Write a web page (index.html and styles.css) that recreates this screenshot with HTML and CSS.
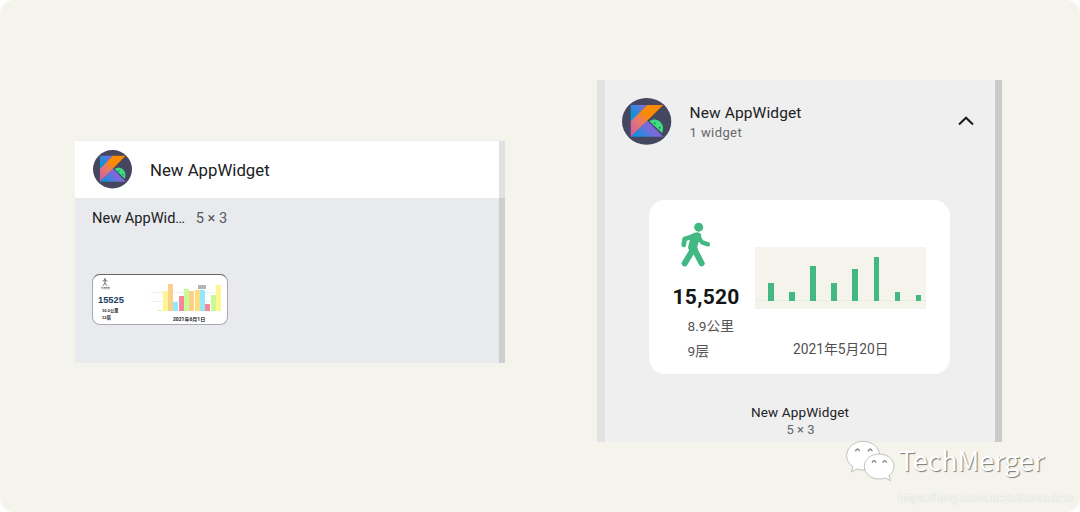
FILE: index.html
```
<!DOCTYPE html>
<html lang="zh">
<head>
    <meta charset="UTF-8">
    <title>New AppWidget</title>
    <link rel="stylesheet" href="styles.css">
</head>
<body>
<div class="outer">
    <!--旧版小组件列表-->
    <div class="old">
        <div class="old-head">
            <svg class="logo-small" viewBox="0 0 49 47" preserveAspectRatio="none">
                <defs>
                    <linearGradient id="orange" x1="1" y1="0" x2="0" y2="1">
                        <stop offset=".4" stop-color="#fb8a00"/>
                        <stop offset=".62" stop-color="#e9796a"/>
                        <stop offset="1" stop-color="#c45ab0"/>
                    </linearGradient>
                    <linearGradient id="blue" x1="0" y1="1" x2="1" y2="0">
                        <stop offset=".3" stop-color="#0c93dc"/>
                        <stop offset=".85" stop-color="#766fdd"/>
                    </linearGradient>
                    <linearGradient id="blue2" x1="0" y1="1" x2="1" y2=".5">
                        <stop offset=".15" stop-color="#0c93dc"/>
                        <stop offset=".65" stop-color="#7a6bdc"/>
                    </linearGradient>
                </defs>
                <g id="kotlin">
                    <ellipse cx="24.5" cy="23.5" rx="24.5" ry="23.5" fill="#45465f"/>
                    <path d="M8.7 7H25L8.7 24z" fill="url(#blue)"/>
                    <path d="M8.7 38.8L25 22.5l16 16.3z" fill="url(#blue2)"/>
                    <path d="M25 7h16L8.7 38.8V23.3z" fill="url(#orange)"/>
                    <path d="M33 23l-.6-2.8M39.6 28.6l2.6-1.2" stroke="#287a55" stroke-width=".9"/>
                    <path d="M27.2 23.3C30.5 20.8 35.5 21.2 38.2 24.2c2.9 3 3.2 7.6 1.6 11z" fill="#3ddc84"/>
                    <circle cx="32.6" cy="25.4" r=".8" fill="#27543f"/>
                    <circle cx="37.5" cy="30" r=".8" fill="#27543f"/>
                </g>
            </svg>
            <p class="old-title">New AppWidget</p>
        </div>
        <div class="old-body">
            <p class="old-name">New AppWid… <span>5 × 3</span></p>
            <div class="mini">
                <div class="mini-info">
                    <svg class="mini-man" viewBox="0 0 6 8">
                        <circle cx="3" cy="1.2" r="1" fill="#777"/>
                        <path d="M.6 2.8h4.8M3 2.5V5L1 7.8M3 5l2 2.8" fill="none" stroke="#555" stroke-width=".8"/>
                    </svg>
                    <p class="mini-tag">今日步数</p>
                    <p class="mini-step">15525</p>
                    <p class="mini-text">10.5公里</p>
                    <p class="mini-text">12层</p>
                </div>
                <div class="mini-right">
                    <div class="mini-chart">
                        <i class="green" style="height:1px"></i>
                        <i class="yellow" style="height:19.7px"></i>
                        <i class="orange" style="height:27.3px"></i>
                        <i class="cyan" style="height:9.3px"></i>
                        <i class="red" style="height:15.3px"></i>
                        <i class="green" style="height:22.3px"></i>
                        <i class="orange" style="height:19.7px"></i>
                        <i class="gold" style="height:20.7px"></i>
                        <i class="cyan" style="height:21.3px"></i>
                        <i class="red" style="height:7.3px"></i>
                        <i class="green" style="height:15.7px"></i>
                        <i class="yellow" style="height:25.7px"></i>
                        <b class="tip"></b>
                    </div>
                    <p class="mini-date">2021年6月1日</p>
                </div>
            </div>
        </div>
    </div>

    <!--新版小组件列表-->
    <div class="new">
        <div class="new-head">
            <svg class="logo-big" viewBox="0 0 49 47" preserveAspectRatio="none"><use href="#kotlin"/></svg>
            <div class="new-title">
                <h3>New AppWidget</h3>
                <p>1 widget</p>
            </div>
            <svg class="arrow" viewBox="0 0 16 10">
                <path d="M1 8.5L8 1.7l7 6.8" fill="none" stroke="#1b1b1d" stroke-width="2"/>
            </svg>
        </div>
        <div class="card">
            <div class="info">
                <svg class="man" viewBox="120 95 95 135">
                    <g fill="none" stroke="#42b883" stroke-linecap="round" stroke-linejoin="round">
                        <path d="M160 138l-26 8-3 18" stroke-width="14"/>
                        <path d="M174 138l12 18 18 6" stroke-width="13"/>
                        <path d="M159 178l-25 41M163 177l22 42" stroke-width="18"/>
                    </g>
                    <circle cx="176" cy="110.5" r="13.5" fill="#42b883"/>
                    <path d="M150 135q10-9 22-9 12 1 12 13l-9 18q-5 12-1 22l-9 6-15-5q-8-4-5-14l6-22z" fill="#42b883"/>
                </svg>
                <p class="step">15,520</p>
                <p class="text">8.9公里</p>
                <p class="text">9层</p>
            </div>
            <div class="right">
                <div class="chart">
                    <i style="height:17.7px"></i>
                    <i style="height:9px"></i>
                    <i style="height:35px"></i>
                    <i style="height:17.7px"></i>
                    <i style="height:31.3px"></i>
                    <i style="height:43.3px"></i>
                    <i style="height:9px"></i>
                    <i style="height:5.7px"></i>
                </div>
                <p class="date">2021年5月20日</p>
            </div>
        </div>
        <p class="new-name">New AppWidget</p>
        <p class="new-size">5 × 3</p>
    </div>

    <!--水印-->
    <div class="mark">
        <svg class="wechat" viewBox="30 26 155 132">
            <g fill="#fff" stroke="#b4b4ae" stroke-width="2.5">
                <path d="M84 33c28 0 50 19 50 43s-22 43-50 43c-7 0-13-1-19-3l-16 9 5-16C42 101 35 90 35 76c0-24 22-43 49-43z"/>
                <path d="M132 71c25 0 45 16 45 37 0 12-6 21-15 28l4 15-14-8c-6 2-13 3-20 3-25 0-44-17-44-38s19-37 44-37z"/>
            </g>
            <path d="M61 63q7-14 13 0M99 63q7-14 13 0M111 97q6-12 12 0M143 97q6-12 12 0" fill="none" stroke="#85857f" stroke-width="4"/>
        </svg>
        <span>TechMerger</span>
    </div>
    <p class="url">https://blog.csdn.net/allisonchen</p>
</div>
</body>
</html>
```
FILE: styles.css
```
*{
    margin: 0;
    padding: 0;
    box-sizing: border-box;
}
body{
    background-color: #fff;
    font-family: Roboto, "Noto Sans CJK SC", sans-serif;
    color: #202124;
}
svg{
    display: block;
    flex-shrink: 0;
}
.outer{
    position: relative;
    width: 1080px;
    height: 512px;
    padding: 80px 78px 0 75px;
    display: flex;
    justify-content: space-between;
    align-items: flex-start;
    border-radius: 14px;
    background-color: #f4f4ec;
    overflow: hidden;
}

/*左边*/
.old{
    width: 430px;
    height: 223px;
    margin-top: 60px;
    border-top: 1px solid #efefef;
    background: linear-gradient(to right, transparent 424px, rgba(0,0,0,.12) 424px) #e8eaed;
}
.old-head{
    height: 57px;
    padding-left: 18px;
    display: flex;
    align-items: center;
    background: linear-gradient(to right, #fff 424px, #e1e1e1 424px);
}
.logo-small{
    width: 39px;
    height: 38.5px;
}
.old-title{
    margin-left: 18px;
    padding-top: 1px;
    font-size: 16.8px;
}
.old-body{
    padding: 10px 0 0 17px;
}
.old-name{
    line-height: 20px;
    font-size: 14.6px;
}
.old-name span{
    margin-left: 7px;
    color: #55575b;
}
.mini{
    width: 136px;
    height: 51px;
    margin-top: 46px;
    display: flex;
    border: 1px solid #a9aaad;
    border-top-color: #666;
    border-radius: 8px;
    background-color: #fff;
    overflow: hidden;
}
.mini-info{
    width: 58px;
    padding: 3px 0 0 5px;
    font-family: "Liberation Sans", "Noto Sans CJK SC", sans-serif;
}
.mini-man{
    width: 6px;
    height: 8px;
    margin-left: 4px;
}
.mini-tag{
    margin-left: 3px;
    line-height: 5px;
    font-size: 2.2px;
}
.mini-step{
    margin-top: 1px;
    line-height: 16px;
    font-size: 9.3px;
    font-weight: bold;
    color: #1b3b62;
}
.mini-text{
    margin-left: 4px;
    line-height: 6.5px;
    font-size: 4.2px;
    font-weight: bold;
}
.mini-right{
    flex: 1;
    padding-top: 8px;
}
.mini-chart{
    position: relative;
    width: 71px;
    height: 28px;
    padding-left: 6.5px;
    display: flex;
    align-items: flex-end;
    gap: .4px;
    background: repeating-linear-gradient(to bottom, #f0f0f0 0, #f0f0f0 .5px, transparent .5px, transparent 4.6px);
}
.mini-chart i{
    width: 4.95px;
}
.green{
    background-color: #c8fb91;
}
.yellow{
    background-color: #fff591;
}
.orange{
    background-color: #fbd08a;
}
.gold{
    background-color: #fddd7c;
}
.cyan{
    background-color: #92e8fd;
}
.red{
    background-color: #f6879a;
}
.tip{
    position: absolute;
    left: 47px;
    top: 2px;
    width: 8px;
    height: 4px;
    background-color: #b5b5b5;
}
.mini-date{
    padding-left: 22px;
    margin-top: 5px;
    line-height: 6px;
    font-size: 5px;
    font-weight: bold;
    white-space: nowrap;
}

/*右边*/
.new{
    width: 405px;
    height: 362px;
    border-left: 8px solid #e2e2e3;
    border-right: 7px solid #cacaca;
    background-color: #efefef;
    text-align: center;
}
.new-head{
    height: 85px;
    padding: 18px 21px 0 17.3px;
    display: flex;
    align-items: flex-start;
    text-align: left;
}
.logo-big{
    width: 49.3px;
    height: 46.8px;
}
.new-title{
    flex: 1;
    margin: 5px 0 0 18px;
}
.new-title h3{
    line-height: 21px;
    font-size: 15.5px;
    font-weight: normal;
    letter-spacing: .1px;
}
.new-title p{
    line-height: 17px;
    font-size: 13px;
    letter-spacing: .4px;
    color: #65676a;
}
.arrow{
    width: 16px;
    height: 10px;
    margin-top: 18px;
}
.card{
    width: 301px;
    height: 174px;
    margin: 35px 0 0 43.5px;
    display: flex;
    border-radius: 16px;
    background-color: #fff;
    text-align: left;
}
.info{
    width: 106.8px;
    padding: 21.5px 0 0 24px;
}
.man{
    width: 31.7px;
    height: 45px;
    margin-left: 7px;
}
.step{
    margin: 18px 0 4px;
    line-height: 25px;
    font-size: 21px;
    font-weight: bold;
    letter-spacing: .3px;
    color: #151515;
}
.text{
    margin-left: 15px;
    line-height: 25px;
    font-size: 13.7px;
    color: #555;
}
.right{
    width: 171px;
    padding-top: 47px;
}
.chart{
    height: 61.5px;
    padding: 0 5px 8px 12.8px;
    display: flex;
    align-items: flex-end;
    gap: 15.5px;
    background: linear-gradient(#e8eee4, #e8eee4) 0 53px / 100% 1px no-repeat #f4f4ec;
}
.chart i{
    width: 5.6px;
    flex-shrink: 0;
    background-color: #42b883;
}
.date{
    margin-top: 30px;
    line-height: 20px;
    font-size: 13.8px;
    text-align: center;
    color: #505050;
}
.new-name{
    margin-top: 29px;
    line-height: 18px;
    font-size: 13.5px;
    letter-spacing: .15px;
}
.new-size{
    padding-left: 1px;
    line-height: 17px;
    font-size: 13px;
    color: #65676a;
}

/*水印*/
.mark{
    position: absolute;
    left: 845px;
    top: 438.6px;
    display: flex;
    align-items: center;
    font-family: "Noto Sans CJK SC", sans-serif;
    font-size: 26.8px;
    line-height: 44px;
    color: #fff;
    text-shadow: 1px 1px 1px #777;
}
.mark span{
    margin-top: -2px;
}
.wechat{
    width: 51.7px;
    height: 44px;
    margin-right: 2px;
}
.url{
    position: absolute;
    left: 898px;
    top: 490px;
    line-height: 16px;
    font-family: "Liberation Sans", sans-serif;
    font-size: 12.3px;
    color: #fafaf7;
    text-shadow: 0 0 1px #c0c0bc;
}
```
